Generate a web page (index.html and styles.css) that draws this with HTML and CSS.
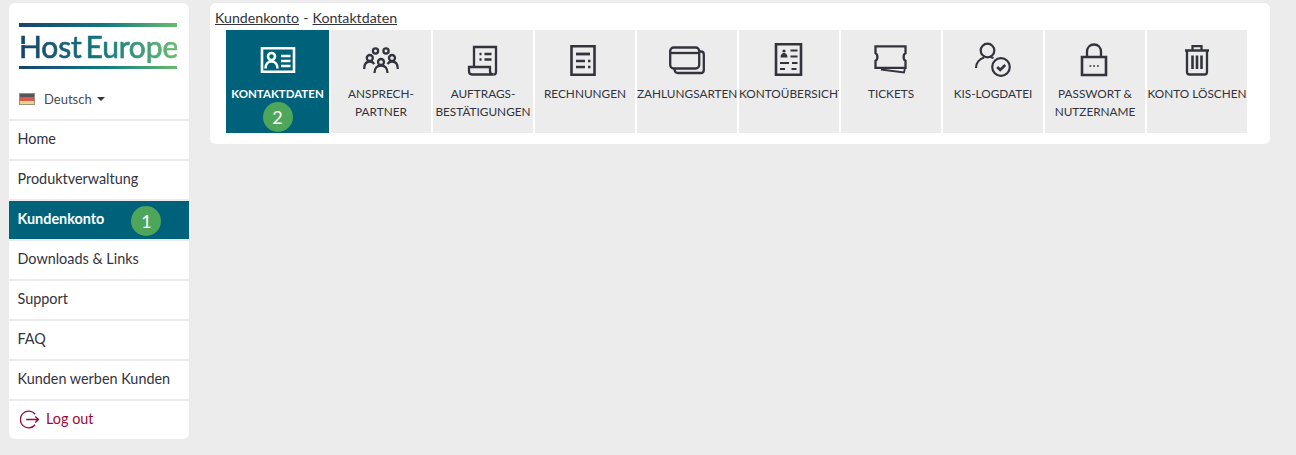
FILE: index.html
```html
<!DOCTYPE html>
<html lang="de">
<head>
  <meta charset="UTF-8" />
  <title>Kontaktdaten</title>
  <link rel="stylesheet" href="styles.css">
</head>
<body>
  <div class="app">
    <!-- SIDEBAR -->
    <aside class="sidebar">
      <div class="brand">
        <div class="logo">
          <div class="logo-bar"></div>
          <div class="logo-text">Host<span class="logo-gap">Europe</span></div>
          <div class="logo-bar"></div>
        </div>
        <div class="lang">
          <span class="flag"></span>
          <span>Deutsch</span>
          <span class="caret"></span>
        </div>
      </div>
      <nav class="nav">
        <a class="nav-item">Home</a>
        <a class="nav-item">Produktverwaltung</a>
        <a class="nav-item active">Kundenkonto <span class="badge badge-side">1</span></a>
        <a class="nav-item">Downloads &amp; Links</a>
        <a class="nav-item">Support</a>
        <a class="nav-item">FAQ</a>
        <a class="nav-item">Kunden werben Kunden</a>
        <a class="nav-item logout">
          <svg class="logout-icon" viewBox="0 0 20 20" fill="none" stroke="currentColor" stroke-width="1.4">
            <path d="M16 4.500A8.800 8.800 0 1 0 16 15.500"/>
            <path d="M6.500 10H19.500M16 6.800l3.500 3.200-3.500 3.200"/>
          </svg>
          Log out
        </a>
      </nav>
    </aside>

    <!-- MAIN -->
    <main class="main">
      <section class="card">
        <div class="crumbs"><a>Kundenkonto</a> <span class="crumb-sep">-</span> <a>Kontaktdaten</a></div>
        <div class="tabs">
          <a class="tab active">
            <svg class="tab-icon" viewBox="0 0 36 36" fill="none" stroke="currentColor" stroke-width="2.600">
              <path d="M2 4.300h32v23.400H2z"/>
              <circle cx="11.500" cy="12.500" r="3.500"/>
              <path d="M5.500 24.500c0-4.500 2.500-7 6-7s6 2.500 6 7"/>
              <path d="M21 12h9.500M21 17h9.500M21 22h9.500" />
            </svg>
            <span class="tab-label">KONTAKTDATEN</span>
            <span class="badge badge-tab">2</span>
          </a>
          <a class="tab">
            <svg class="tab-icon" viewBox="0 0 36 36" fill="none" stroke="currentColor" stroke-width="2.300">
              <circle cx="12.500" cy="7" r="2.600"/><circle cx="23" cy="7" r="2.600"/>
              <circle cx="6.800" cy="14" r="3"/><circle cx="29" cy="14" r="3"/><circle cx="18" cy="18" r="3"/>
              <path d="M1.200 25c0-5 2-7.500 5.600-7.500 2 0 3.500 1 4.500 2.500M34.800 25c0-5-2-7.500-5.800-7.500-2 0-3.500 1-4.500 2.500"/>
              <path d="M11.500 29c0-4.500 2.500-7.500 6.500-7.500s6.500 3 6.500 7.500"/>
            </svg>
            <span class="tab-label">ANSPRECH-<br>PARTNER</span>
          </a>
          <a class="tab">
            <svg class="tab-icon" viewBox="0 0 36 36" fill="none" stroke="currentColor" stroke-width="2.300">
              <path d="M9 23V3h22v25c0 1.500-1 2.500-2.500 2.500"/>
              <path d="M4 23h21v4c0 2 1.500 3.500 3.500 3.500H7c-2 0-3-1.500-3-3.500z"/>
              <path d="M14.500 10h2M19.500 10h7M14.500 15.500h2M19.500 15.500h7" />
            </svg>
            <span class="tab-label">AUFTRAGS-<br>BESTÄTIGUNGEN</span>
          </a>
          <a class="tab">
            <svg class="tab-icon" viewBox="0 0 36 36" fill="none" stroke="currentColor" stroke-width="2.600">
              <path d="M4.500 2.300h23v28.400h-23z"/>
              <path d="M9 10h14" stroke-width="2.800"/>
              <path d="M9 17h9M21 17h2.500M9 23h9M21 23h2.500" stroke-width="2.400"/>
            </svg>
            <span class="tab-label">RECHNUNGEN</span>
          </a>
          <a class="tab">
            <svg class="tab-icon" viewBox="0 0 36 36" fill="none" stroke="currentColor" stroke-width="2.300">
              <rect x="1.200" y="3.500" width="29" height="21" rx="3.500"/>
              <path d="M1.200 9h29" />
              <path d="M30 7.500h2c1.500 0 2.800 1.300 2.800 3V26c0 1.500-1 3-2.800 3H9c-2 0-3.500-1.500-3.500-4.500"/>
            </svg>
            <span class="tab-label">ZAHLUNGSARTEN</span>
          </a>
          <a class="tab">
            <svg class="tab-icon" viewBox="0 0 36 36" fill="none" stroke="currentColor" stroke-width="2.600">
              <path d="M5 0.300h25v30.400H5z"/>
              <circle cx="13" cy="7" r="1.600" fill="currentColor" stroke="none"/>
              <path d="M9.500 13.500c0-3 1.500-4.500 3.500-4.500s3.500 1.500 3.500 4.500z" fill="currentColor" stroke="none"/>
              <path d="M19.500 6.500h7M19.500 12.500h7M9 19h9M21 19h5.500M9 25h5M20.500 25h5" stroke-width="2.200"/>
            </svg>
            <span class="tab-label">KONTOÜBERSICHT</span>
          </a>
          <a class="tab">
            <svg class="tab-icon" viewBox="0 0 36 36" fill="none" stroke="currentColor" stroke-width="2.300">
              <path d="M2.500 2.300h30v7c-2.500 1-2.500 6.500 0 7.500v7h-30v-7c2.500-1 2.500-6.500 0-7.500z"/>
              <path d="M8 25.500l23 3 .8-3.500" stroke-width="1.800"/>
            </svg>
            <span class="tab-label">TICKETS</span>
          </a>
          <a class="tab">
            <svg class="tab-icon" viewBox="0 0 36 36" fill="none" stroke="currentColor" stroke-width="2.200">
              <circle cx="12.500" cy="6.500" r="6.800"/>
              <path d="M1 24c0-5 3.500-9 8-10.500M15.500 13l3 1"/>
              <circle cx="26" cy="23" r="8.800"/>
              <path d="M22.200 23l3 3 5-5" stroke-width="2.600"/>
            </svg>
            <span class="tab-label">KIS-LOGDATEI</span>
          </a>
          <a class="tab">
            <svg class="tab-icon" viewBox="0 0 36 36" fill="none" stroke="currentColor" stroke-width="2.600">
              <path d="M5 13h24v18H5z"/>
              <path d="M10 13V8c0-4.500 3-7.500 7-7.500s7 3 7 7.500v5" stroke-width="2.300"/>
              <path d="M12.500 22h1.800M16.200 22h1.800M20 22h1.800" stroke-width="1.600"/>
            </svg>
            <span class="tab-label">PASSWORT &amp;<br>NUTZERNAME</span>
          </a>
          <a class="tab">
            <svg class="tab-icon" viewBox="0 0 36 36" fill="none" stroke="currentColor" stroke-width="2.300">
              <path d="M8 7v21c0 1.500 1 2.500 2.500 2.500h15c1.500 0 2.500-1 2.500-2.500V7"/>
              <path d="M6 6.500h24M13.500 6V2.200h9V6"/>
              <path d="M13.500 11.500v13.500M18 11.500v13.500M22.500 11.500v13.500" stroke-width="2.600"/>
            </svg>
            <span class="tab-label">KONTO LÖSCHEN</span>
          </a>
        </div>
      </section>
    </main>
  </div>
</body>
</html>
```

FILE: styles.css
```css
/* BASE */
* { margin:0; padding:0; box-sizing:border-box; }
html, body { height:100%; }
body {
  background:#ececec;
  color:#33333d;
  font-family:'Lato','Liberation Sans',sans-serif;
  font-size:14px;
  overflow:hidden;
}

.app {
  display:flex;
  align-items:flex-start;
  gap:21px;
  padding:3px 26px 0 9px;
}

/* SIDEBAR */
.sidebar {
  width:180px;
  flex:none;
  background:#fff;
  border-radius:6px;
  overflow:hidden;
}
.brand { height:116px; padding:20px 10px 0; }
.logo { width:158px; }
.logo-bar {
  height:3.500px;
  background:linear-gradient(90deg,#17446b,#137a80 55%,#6abb6e);
}
.logo-text {
  position:relative;
  height:34px;
  margin:2px 0 3px;
  font-size:30px;
  line-height:34px;
  letter-spacing:-.15px;
  white-space:nowrap;
  color:transparent;
  -webkit-text-stroke:.7px transparent;
  background:linear-gradient(90deg,#17446b,#137a80 55%,#6abb6e);
  -webkit-background-clip:text;
  background-clip:text;
}
/* cut through the H */
.logo-text::before {
  content:'';
  position:absolute;
  left:0;
  top:15px;
  width:14px;
  height:1px;
  background:#fff;
}
.logo-gap { margin-left:4px; }

.lang {
  display:flex;
  align-items:center;
  margin-top:22px;
  font-size:13px;
  color:#4a4a55;
}
.flag {
  width:16px;
  height:12px;
  margin-right:9px;
  border:1px solid #99917f;
  background:linear-gradient(#555 0 33%,#d8594e 33% 66%,#ecd683 66%);
}
.caret {
  margin-left:5px;
  border:4px solid transparent;
  border-top-color:#33333d;
  border-bottom:0;
}

.nav { display:flex; flex-direction:column; }
.nav-item {
  display:flex;
  align-items:center;
  height:40px;
  padding:0 8.500px 4px;
  border-top:2px solid #ececec;
  color:#33333d;
  font-size:14.400px;
}
.nav-item.active {
  background:#00627a;
  color:#fff;
  font-weight:700;
}
.logout { color:#9a0b3c; gap:7px; padding-left:11px; }
.logout-icon { width:19px; height:19px; margin-top:2px; }

.badge {
  display:flex;
  align-items:center;
  justify-content:center;
  width:30px;
  height:30px;
  border-radius:50%;
  background:#4ea65b;
  color:#fff;
  font-size:18px;
  font-weight:400;
}
.badge-side { margin:5px 0 0 27px; }

/* MAIN CARD */
.main { flex:1; }
.card {
  height:141px;
  padding:7px 16px 0 5px;
  background:#fff;
  border-radius:6px;
}
.crumbs { height:20px; font-size:14.200px; line-height:15px; }
.crumbs a { text-decoration:underline; }
.crumb-sep { margin:0 .500px; }

.tabs {
  display:flex;
  gap:2px;
  height:103px;
  margin-left:11px;
}
.tab {
  display:flex;
  flex-direction:column;
  align-items:stretch;
  width:100px;
  padding-top:14px;
  background:#ececec;
  color:#33333d;
  text-align:center;
  overflow:hidden;
}
.tab.active {
  width:103px;
  background:#00627a;
  color:#fff;
}
.tab.active .tab-label { font-weight:700; font-size:11.500px; }
.tab-icon { width:36px; height:36px; flex:none; align-self:center; overflow:visible; }
.tab-label {
  display:block;
  margin-top:5px;
  font-size:11.800px;
  line-height:18px;
  white-space:nowrap;
}
.badge-tab { align-self:center; margin-top:-1px; }
```
